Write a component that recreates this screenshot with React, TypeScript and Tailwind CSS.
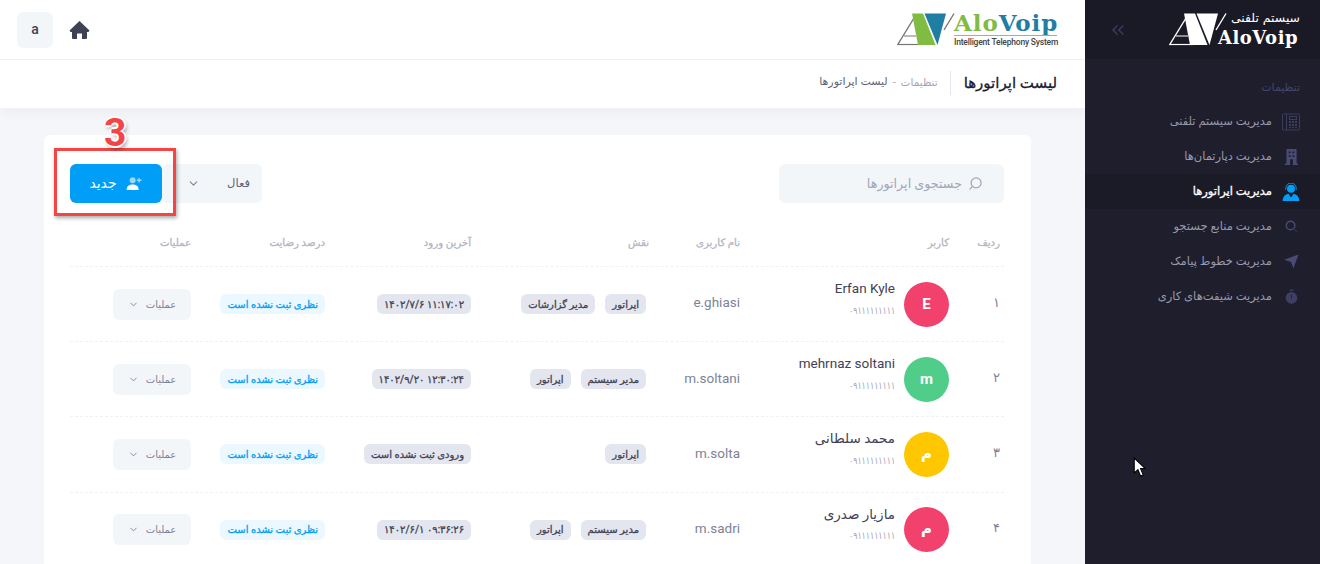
import React from "react";
import { ChevronDown, ChevronsLeft, Search } from "lucide-react";

const F = "[font-family:Roboto,'DejaVu_Sans',sans-serif]";
const semi = "[-webkit-text-stroke:0.3px_currentColor]";

const rows = [
  { n: "۱", name: "Erfan Kyle", letter: "E", color: "bg-[#f1416c]", user: "e.ghiasi", roles: ["اپراتور", "مدیر گزارشات"], last: "۱۴۰۲/۷/۶ ۱۱:۱۷:۰۲", ltr: true },
  { n: "۲", name: "mehrnaz soltani", letter: "m", color: "bg-[#50cd89]", user: "m.soltani", roles: ["مدیر سیستم", "اپراتور"], last: "۱۴۰۲/۹/۲۰ ۱۲:۳۰:۲۴", ltr: true },
  { n: "۳", name: "محمد سلطانی", letter: "م", color: "bg-[#ffc700]", user: "m.solta", roles: ["اپراتور"], last: "ورودی ثبت نشده است", ltr: false },
  { n: "۴", name: "مازیار صدری", letter: "م", color: "bg-[#f1416c]", user: "m.sadri", roles: ["مدیر سیستم", "اپراتور"], last: "۱۴۰۲/۶/۱ ۰۹:۳۶:۲۶", ltr: true },
];

const grid = "grid grid-cols-[55px_209px_91px_178px_146px_134px_121px] items-center";

function Mark({ a, b, line }: { a: string; b: string; line: string }) {
  return (
    <svg viewBox="0 0 60 33" className="absolute left-0 top-0 w-[60px] h-[33px]">
      <path d="M0.5 32 L17 5" stroke={line} strokeWidth="1.4" fill="none" />
      <path d="M0.5 31.5 H24" stroke={line} strokeWidth="1.2" fill="none" />
      <path d="M7 23 H19" stroke={line} strokeWidth="1" fill="none" />
      <path d="M15 0.5 H26 L38.5 32 H21 Z" fill={a} />
      <path d="M27.5 0.5 H49 L40.5 32 Z" fill={b} />
      <path d="M47 17 L57 0.5" stroke={line} strokeWidth="1.4" fill="none" />
    </svg>
  );
}

function TopLogo() {
  return (
    <div dir="ltr" className="relative w-[160px] h-[33px] shrink-0 mt-[-1px]">
      <Mark a="#7fbc41" b="#1f7fa3" line="#77777a" />
      <span className="absolute left-[57px] top-[-4px] [font-family:'DejaVu_Serif',serif] font-bold text-[23px] leading-[27px] tracking-[0.9px] whitespace-nowrap">
        <span className="text-[#7fbc41]">Alo</span>
        <span className="text-[#1f7fa3]">Voip</span>
      </span>
      <div className="absolute left-[57px] right-0 top-[22px] h-px bg-[#a8a8a8]" />
      <span className="absolute left-[57px] top-[24px] text-[8.5px] leading-[10px] font-medium tracking-[-0.2px] text-[#444] whitespace-nowrap [font-family:Roboto,sans-serif]">Intelligent Telephony System</span>
    </div>
  );
}

function SideLogo() {
  return (
    <div dir="ltr" className="relative w-[131px] h-[33px] shrink-0">
      <Mark a="#fff" b="#fff" line="#fff" />
      <span className="absolute left-[49px] top-[17px] [font-family:'DejaVu_Serif',serif] font-bold text-[18px] leading-[16px] tracking-[0.5px] text-white whitespace-nowrap">AloVoip</span>
      <span dir="rtl" className="absolute right-0 top-[-3px] text-[12.4px] leading-[16px] text-white whitespace-nowrap [font-family:'DejaVu_Sans',sans-serif]">سیستم تلفنی</span>
    </div>
  );
}

const ic = "#494b74";
const icons: Record<string, React.ReactNode> = {
  phone: (
    <svg viewBox="0 0 18 18" className="w-[18px] h-[18px]" fill="none" stroke="#3b3c5e">
      <rect x="0.5" y="1" width="17" height="16" rx="1" />
      <path d="M4.5 1V17" />
      <rect x="7.5" y="3.5" width="7" height="3" />
      <path d="M7 8h2v2H7zM10 8h2v2h-2zM13 8h2v2h-2zM7 11h2v2H7zM10 11h2v2h-2zM13 11h2v2h-2zM7 14h2v1H7zM10 14h2v1h-2zM13 14h2v1h-2z" fill="#3b3c5e" stroke="none" />
    </svg>
  ),
  building: (
    <svg viewBox="0 0 14 17" className="w-[13px] h-[16px]">
      <path d="M1.5 0H12.5V15.5H14V17H0V15.5H1.5Z" fill={ic} />
      <path d="M4 2.5h2v2H4zM8 2.5h2v2H8zM4 6.5h2v2H4zM8 6.5h2v2H8zM5.5 11h3v6h-3z" fill="#1e1e2d" />
    </svg>
  ),
  operator: (
    <svg viewBox="0 0 18 18" className="w-[18px] h-[18px]" fill="#009ef7">
      <circle cx="9" cy="5.8" r="4" />
      <path d="M3.8 7V5.2a5.2 5.2 0 0 1 10.4 0V7" fill="none" stroke="#009ef7" strokeWidth="0.9" />
      <path d="M0.5 18C0.8 14 3 11.5 6.5 10.8L8.6 14H9.4L11.5 10.8C15 11.5 17.2 14 17.5 18Z" />
    </svg>
  ),
  search: (
    <svg viewBox="0 0 14 14" className="w-[13px] h-[13px]" fill="none" stroke={ic} strokeWidth="1.6">
      <circle cx="6" cy="6" r="4.6" />
      <path d="M9.5 9.5L13 13" stroke="#2e2f48" />
    </svg>
  ),
  send: (
    <svg viewBox="0 0 16 16" className="w-[15px] h-[15px]">
      <path d="M0 6L15.5 0.5L10 15.5L7.5 8.5Z" fill={ic} />
    </svg>
  ),
  timer: (
    <svg viewBox="0 0 14 16" className="w-[13px] h-[15px]">
      <circle cx="7" cy="9.5" r="6.3" fill="#3e3f62" />
      <path d="M5 0.5h4v1.5H5z" fill="#3e3f62" />
      <path d="M7 6v4" stroke="#1e1e2d" strokeWidth="1" />
    </svg>
  ),
};

const menu = [
  { t: "مدیریت سیستم تلفنی", i: "phone" },
  { t: "مدیریت دپارتمان‌ها", i: "building" },
  { t: "مدیریت اپراتورها", i: "operator", active: true },
  { t: "مدیریت منابع جستجو", i: "search" },
  { t: "مدیریت خطوط پیامک", i: "send" },
  { t: "مدیریت شیفت‌های کاری", i: "timer" },
];

function Badge({ children, ltr }: { children: React.ReactNode; ltr?: boolean }) {
  return (
    <span dir={ltr ? "ltr" : undefined} className={`inline-flex items-center h-[20px] px-[7px] rounded-[6px] bg-[#e4e6ef] text-[#3f4254] text-[10px] whitespace-nowrap ${semi}`}>
      {children}
    </span>
  );
}

export default function App() {
  return (
    <div dir="ltr" className={`relative flex w-[1320px] h-[564px] overflow-hidden bg-[#f4f6f9] ${F}`}>
      <main dir="rtl" className="flex flex-col w-[1085px] h-full">
        <header className="flex items-center justify-between h-[60px] shrink-0 bg-white border-b border-[#eff2f5] pr-[28px] pl-[17px]">
          <TopLogo />
          <div dir="ltr" className="flex items-center gap-[16px]">
            <div className="w-[36px] h-[36px] rounded-[6px] bg-[#f3f6f9] flex items-center justify-center text-[14px] font-medium text-[#3f4254]">a</div>
            <svg viewBox="0 0 20 20" className="w-[21px] h-[20px]">
              <path d="M10 1L20 10.5L19 12H17.5V18a1 1 0 0 1-1 1H12.5V13.5H7.5V19H3.5a1 1 0 0 1-1-1V12H1L0 10.5Z" fill="#3f4254" />
            </svg>
          </div>
        </header>

        <div className="flex items-center h-[48px] shrink-0 bg-white pr-[28px] pb-[3px] shadow-[0_6px_10px_rgba(0,0,0,0.03)]">
          <h1 className={`text-[15px] font-normal text-[#181c32] pl-[13px] border-l border-[#e4e6ef] leading-[24px] ${semi}`}>لیست اپراتورها</h1>
          <span className="text-[10.5px] text-[#a1a5b7] mr-[12px]">تنظیمات</span>
          <span className="text-[10.5px] text-[#a1a5b7] mx-[5px]">-</span>
          <span className="text-[11px] text-[#5e6278]">لیست اپراتورها</span>
        </div>

        <section className="mt-[27px] mr-[54px] w-[987px] shrink-0 bg-white rounded-[6px] pt-[29px] pr-[27px] pl-[26px]">
          <div className="flex items-center justify-between h-[39px]">
            <div className="flex items-center w-[225px] h-[39px] rounded-[6px] bg-[#f3f6f9] pr-[21px] gap-[6px] text-[12.7px] text-[#a1a5b7]">
              <Search size={15} color="#a1a5b7" strokeWidth={2} className="-scale-x-100" />
              <span>جستجوی اپراتورها</span>
            </div>
            <div className="flex items-center">
              <div className="flex items-center justify-between w-[100px] h-[39px] rounded-[6px] bg-[#f3f6f9] pr-[12px] pl-[25px] text-[11.5px] text-[#5e6278]">
                <span>فعال</span>
                <ChevronDown size={13} color="#7e8299" />
              </div>
              <button className="flex items-center justify-center gap-[9px] w-[92px] h-[39px] rounded-[6px] bg-[#009ef7] text-white text-[14px]">
                <svg viewBox="0 0 18 14" className="w-[17px] h-[13px]">
                  <circle cx="7" cy="3.5" r="3.2" fill="#fff" opacity="0.6" />
                  <path d="M0.5 14C0.5 9.5 3.5 8 7 8S13.5 9.5 13.5 14Z" fill="#fff" />
                  <path d="M14 1v5M11.5 3.5h5" stroke="#fff" strokeOpacity="0.6" strokeWidth="1.5" />
                </svg>
                <span>جدید</span>
              </button>
            </div>
          </div>

          <div className={`${grid} h-[37px] mt-[27px] border-b border-dashed border-[#eff2f5] text-[10.2px] text-[#b5b5c3] pb-[10px] ${semi}`}>
            <div className="pr-[4px]">ردیف</div>
            <div>کاربر</div>
            <div>نام کاربری</div>
            <div>نقش</div>
            <div>آخرین ورود</div>
            <div>درصد رضایت</div>
            <div>عملیات</div>
          </div>

          {rows.map((r) => (
            <div key={r.n} className={`${grid} h-[75.2px] border-b border-dashed border-[#eff2f5]`}>
              <div className="pr-[4px] pb-[3px] text-[13px] text-[#7e8299]">{r.n}</div>
              <div className="flex items-center gap-[9px]">
                <div className={`w-[45px] h-[45px] rounded-full ${r.color} flex items-center justify-center text-white text-[15px] font-bold`}>{r.letter}</div>
                <div className="flex flex-col gap-[5.5px] items-start pb-[12.5px]">
                  <span className="text-[13.5px] leading-[20px] text-[#3f4254]">{r.name}</span>
                  <span className="inline-block origin-right scale-x-[0.78] text-[10px] leading-[14px] text-[#a1a5b7]">۰۹۱۱۱۱۱۱۱۱۱</span>
                </div>
              </div>
              <div className="text-[13.5px] pb-[3px] text-[#7e8299]">{r.user}</div>
              <div className="flex gap-[10px] pr-[3px]">
                {r.roles.map((x) => <Badge key={x}>{x}</Badge>)}
              </div>
              <div className="flex"><Badge ltr={r.ltr}>{r.last}</Badge></div>
              <div className="flex">
                <span className={`inline-flex items-center h-[20px] px-[7px] rounded-[6px] bg-[#ecf8ff] text-[#009ef7] text-[10px] whitespace-nowrap ${semi}`}>نظری ثبت نشده است</span>
              </div>
              <div className="flex">
                <div className="flex items-center justify-center gap-[7px] w-[78px] h-[31px] rounded-[6px] bg-[#f3f6f9] text-[10px] text-[#7e8299]">
                  <span>عملیات</span>
                  <ChevronDown size={11} color="#7e8299" />
                </div>
              </div>
            </div>
          ))}
        </section>
      </main>

      <aside dir="rtl" className="w-[235px] h-full shrink-0 bg-[#1e1e2d]">
        <div className="flex items-center justify-between h-[59px] bg-[#1a1a27] pr-[20px] pl-[23px]">
          <SideLogo />
          <ChevronsLeft size={20} color="#3f4068" strokeWidth={1.5} />
        </div>
        <div className="pt-[21px] pr-[20px] text-[11px] leading-[16px] text-[#45466a]">تنظیمات</div>
        <nav className="mt-[8px]">
          {menu.map((m) => (
            <div key={m.t} className={`flex items-center h-[35px] pr-[19px] gap-[9px] ${m.active ? `bg-[#1b1b28] text-white text-[11.5px] ${semi}` : "text-[#9899ac] text-[11.5px]"}`}>
              <span className="w-[20px] flex justify-center">{icons[m.i]}</span>
              <span>{m.t}</span>
            </div>
          ))}
        </nav>
      </aside>

      {/* annotation overlay */}
      <div className="absolute left-[54px] top-[148px] w-[122px] h-[68px] border-[3px] border-[#f44545] shadow-[1px_2px_4px_rgba(0,0,0,0.35)] pointer-events-none" />
      <div className="absolute left-[104px] top-[109px] text-[39px] leading-[48px] font-bold text-[#f44545] [font-family:Roboto,sans-serif] [text-shadow:0_0_2px_#fff,2px_0_0_#fff,-2px_0_0_#fff,0_2px_0_#fff,0_-2px_0_#fff,2px_3px_4px_rgba(0,0,0,0.4)]">3</div>
      <svg viewBox="0 0 12 19" className="absolute left-[1133px] top-[457px] w-[13px] h-[20px]">
        <path d="M1 1V15L4.5 12L7 18L9.5 17L7 11H11.5Z" fill="#fff" stroke="#000" strokeWidth="1" />
      </svg>
    </div>
  );
}
